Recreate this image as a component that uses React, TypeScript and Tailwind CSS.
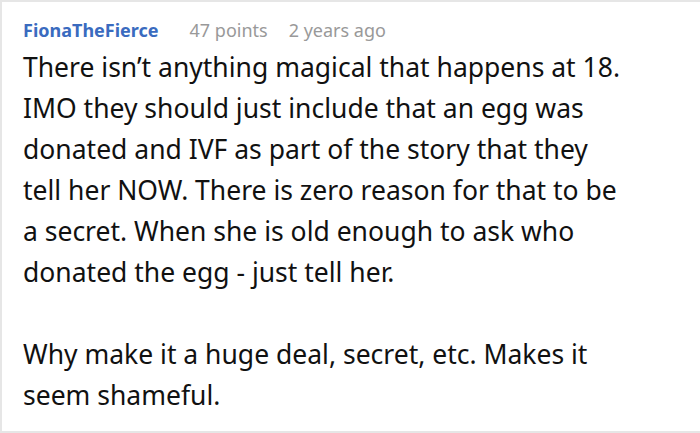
export default function App() {
  return (
    <div className="h-[433px] w-[700px] overflow-hidden bg-white">
      <div className="h-[433px] border-y-2 border-l-2 border-[#e6e6e6] pl-[21px] pt-[16px] font-['Noto_Sans',sans-serif]">
        <div className="flex items-baseline text-[18px] leading-[24px]">
          <span className="font-bold text-[#3a6bbf]">FionaTheFierce</span>
          <span className="ml-[31px] text-[#999]">47 points</span>
          <span className="ml-[21px] text-[#999]">2 years ago</span>
        </div>
        <div className="mt-[5px] text-[26.5px] leading-[41px] text-[#111]">
          <p>
            There isn’t anything magical that happens at 18.
            <br />
            IMO they should just include that an egg was
            <br />
            donated and IVF as part of the story that they
            <br />
            tell her NOW. There is zero reason for that to be
            <br />
            a secret. When she is old enough to ask who
            <br />
            donated the egg - just tell her.
          </p>
          <p className="mt-[41px]">
            Why make it a huge deal, secret, etc. Makes it
            <br />
            seem shameful.
          </p>
        </div>
      </div>
    </div>
  );
}
